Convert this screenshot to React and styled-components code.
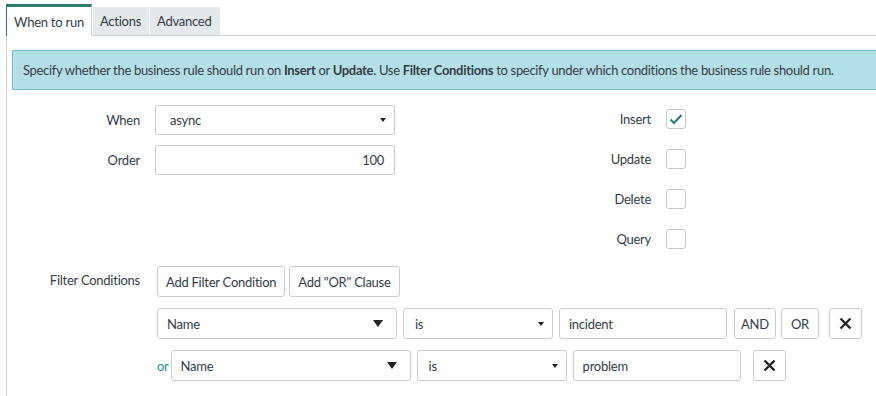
import React from 'react'
import styled, { createGlobalStyle } from 'styled-components'

const Global = createGlobalStyle`
  html, body { margin: 0; padding: 0; background: #fff; }
  body {
    font-family: Lato, "Open Sans", sans-serif;
    font-size: 13px;
    letter-spacing: -0.25px;
    color: #343d47;
  }
`

const Page = styled.div`
  width: 876px;
  height: 396px;
  overflow: hidden;
  padding: 3px 0 0 6px;
  box-sizing: border-box;
`

const TabBar = styled.div`
  display: flex;
  align-items: flex-end;
  height: 32px;
  border-bottom: 1px solid #cfd2d4;
`

const Tab = styled.div`
  height: ${p => (p.active ? '29px' : '28px')};
  padding: 0 ${p => (p.active ? '7px' : '7px')};
  display: flex;
  align-items: center;
  background: ${p => (p.active ? '#fff' : '#e6e9eb')};
  border-top: ${p => (p.active ? '3px solid #2b7d6e' : '0')};
  border-left: ${p => (p.active ? '1px solid #2b7d6e' : '1px solid #fff')};
  border-right: 1px solid ${p => (p.active ? '#cfd2d4' : '#e6e9eb')};
  margin-bottom: ${p => (p.active ? '-1px' : '0')};
  position: relative;
  color: #343d47;
`

const Body = styled.div`
  border-left: 1px solid #cfd2d4;
  padding: 14px 0 20px 5px;
`

const Info = styled.div`
  background: #b5dfe6;
  border: 1px solid #6fbccb;
  border-right: 0;
  border-radius: 2px 0 0 2px;
  height: 38px;
  display: flex;
  align-items: center;
  padding-left: 10px;
  white-space: nowrap;
  letter-spacing: -0.32px;
  b { font-weight: 700; }
`

const FormTop = styled.div`
  display: flex;
  margin-top: 15px;
`

const LeftCol = styled.div`
  display: flex;
  flex-direction: column;
  gap: 10px;
`

const Field = styled.div`
  display: flex;
  align-items: center;
  height: 30px;
`

const Label = styled.div`
  width: ${p => p.w || '128px'};
  padding-right: 15px;
  text-align: right;
  flex-shrink: 0;
`

const Control = styled.div`
  width: ${p => p.w};
  height: ${p => p.h || '30px'};
  box-sizing: border-box;
  border: 1px solid #ccc;
  border-radius: 3px;
  display: flex;
  align-items: center;
  justify-content: ${p => (p.right ? 'flex-end' : 'space-between')};
  padding: 0 ${p => p.pr || '10px'} 0 ${p => p.pl || '10px'};
  background: #fff;
  flex-shrink: 0;
`

const Caret = styled.span`
  width: 0;
  height: 0;
  border-left: ${p => p.s}px solid transparent;
  border-right: ${p => p.s}px solid transparent;
  border-top: ${p => p.s * 1.5}px solid #222;
`

const RightCol = styled.div`
  display: flex;
  flex-direction: column;
  gap: 20px;
  margin-top: 4px;
`

const CheckRow = styled.div`
  display: flex;
  align-items: center;
  height: 20px;
`

const Box = styled.div`
  width: 20px;
  height: 20px;
  box-sizing: border-box;
  border: 1px solid #c8c8c8;
  border-radius: 3px;
  display: flex;
  align-items: center;
  justify-content: center;
`

const Filter = styled.div`
  display: flex;
  margin-top: 17px;
`

const FilterLabel = styled.div`
  width: 128px;
  padding-right: 17px;
  text-align: right;
  padding-top: 6px;
  flex-shrink: 0;
`

const FilterBody = styled.div`
  display: flex;
  flex-direction: column;
  gap: 11px;
`

const Row = styled.div`
  display: flex;
  align-items: center;
  gap: ${p => p.gap || '6px'};
`

const Btn = styled.div`
  height: 31px;
  box-sizing: border-box;
  border: 1px solid #ccc;
  border-radius: 3px;
  padding: 0 ${p => p.px || '8px'};
  display: flex;
  align-items: center;
  justify-content: center;
  background: #fff;
  margin-left: ${p => p.ml || '0'};
  flex-shrink: 0;
`

const Or = styled.span`
  color: #2e8a8a;
  margin-right: -4px;
`

const Check = () => (
  <svg width="14" height="12" viewBox="0 0 14 12">
    <path d="M1.5 6.5 L5 10 L12.5 2" fill="none" stroke="#2b7d6e" strokeWidth="2" />
  </svg>
)

const Cross = () => (
  <svg width="13" height="13" viewBox="0 0 13 13">
    <path d="M1.5 1.5 L11.5 11.5 M11.5 1.5 L1.5 11.5" stroke="#222" strokeWidth="2.4" />
  </svg>
)

const Sel = ({ w, text, big }) => (
  <Control w={w} h="31px" pl={big ? '9px' : '11px'} pr={big ? '13px' : '8px'}>
    <span>{text}</span>
    <Caret s={big ? 5 : 3} />
  </Control>
)

const Cond = ({ prefix, field, op, value, extra }) => (
  <Row>
    {prefix}
    <Sel w="240px" text={field} big />
    <Sel w="150px" text={op} />
    <Control w="168px" h="31px" pl="9px">{value}</Control>
    {extra}
  </Row>
)

export default function App() {
  return (
    <Page>
      <Global />
      <TabBar>
        <Tab active>When to run</Tab>
        <Tab>Actions</Tab>
        <Tab>Advanced</Tab>
      </TabBar>
      <Body>
        <Info>
          Specify whether the business rule should run on&nbsp;<b>Insert</b>&nbsp;or&nbsp;<b>Update</b>. Use&nbsp;<b>Filter Conditions</b>&nbsp;to specify under which conditions the business rule should run.
        </Info>
        <FormTop>
          <LeftCol>
            <Field>
              <Label>When</Label>
              <Control w="240px" pl="14px" pr="8px">
                <span>async</span>
                <Caret s={3} />
              </Control>
            </Field>
            <Field>
              <Label>Order</Label>
              <Control w="240px" right>100</Control>
            </Field>
          </LeftCol>
          <RightCol>
            {['Insert', 'Update', 'Delete', 'Query'].map((n, i) => (
              <CheckRow key={n}>
                <Label w="256px">{n}</Label>
                <Box>{i === 0 && <Check />}</Box>
              </CheckRow>
            ))}
          </RightCol>
        </FormTop>
        <Filter>
          <FilterLabel>Filter Conditions</FilterLabel>
          <FilterBody>
            <Row gap="4px">
              <Btn>Add Filter Condition</Btn>
              <Btn>Add "OR" Clause</Btn>
            </Row>
            <Cond
              field="Name"
              op="is"
              value="incident"
              extra={
                <>
                  <Btn px="6px" ml="1px">AND</Btn>
                  <Btn px="9px" ml="-1px">OR</Btn>
                  <Btn px="9px" ml="4px"><Cross /></Btn>
                </>
              }
            />
            <Cond
              prefix={<Or>or</Or>}
              field="Name"
              op="is"
              value="problem"
              extra={<Btn px="9px" ml="6px"><Cross /></Btn>}
            />
          </FilterBody>
        </Filter>
      </Body>
    </Page>
  )
}
